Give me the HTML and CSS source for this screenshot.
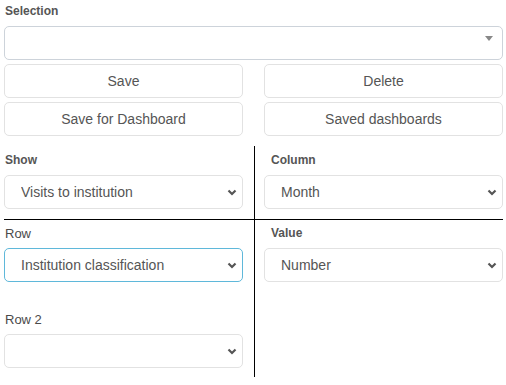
FILE: index.html
```html
<!DOCTYPE html>
<html lang="en">
<head>
    <meta charset="UTF-8">
    <meta name="viewport" content="width=device-width, initial-scale=1.0">
    <title>Pivot settings</title>
    <link rel="stylesheet" href="styles.css">
</head>
<body>
    <div class="page">
        <!-- saved selection -->
        <label class="field-label">Selection</label>
        <div class="combo">
            <span class="combo-arrow"></span>
        </div>

        <div class="button-grid">
            <button class="btn">Save</button>
            <button class="btn">Delete</button>
            <button class="btn">Save for Dashboard</button>
            <button class="btn">Saved dashboards</button>
        </div>

        <!-- pivot fields -->
        <div class="pivot">
            <div class="cell cell-top">
                <label class="field-label">Show</label>
                <div class="select-wrap">
                    <select class="form-select">
                        <option>Visits to institution</option>
                    </select>
                    <svg class="chevron" width="10" height="7" viewBox="0 0 10 7"><path d="M1.5 1.5 L5 5 L8.5 1.5" fill="none" stroke="#555" stroke-width="2.2"/></svg>
                </div>
            </div>
            <div class="divider"></div>
            <div class="cell cell-top cell-right">
                <label class="field-label">Column</label>
                <div class="select-wrap">
                    <select class="form-select">
                        <option>Month</option>
                    </select>
                    <svg class="chevron" width="10" height="7" viewBox="0 0 10 7"><path d="M1.5 1.5 L5 5 L8.5 1.5" fill="none" stroke="#555" stroke-width="2.2"/></svg>
                </div>
            </div>

            <div class="hline"></div>

            <div class="cell cell-mid">
                <label class="field-label light">Row</label>
                <div class="select-wrap">
                    <select class="form-select focused">
                        <option>Institution classification</option>
                    </select>
                    <svg class="chevron" width="10" height="7" viewBox="0 0 10 7"><path d="M1.5 1.5 L5 5 L8.5 1.5" fill="none" stroke="#555" stroke-width="2.2"/></svg>
                </div>
            </div>
            <div class="cell cell-mid cell-right">
                <label class="field-label">Value</label>
                <div class="select-wrap">
                    <select class="form-select">
                        <option>Number</option>
                    </select>
                    <svg class="chevron" width="10" height="7" viewBox="0 0 10 7"><path d="M1.5 1.5 L5 5 L8.5 1.5" fill="none" stroke="#555" stroke-width="2.2"/></svg>
                </div>
            </div>

            <div class="cell cell-bottom">
                <label class="field-label light">Row 2</label>
                <div class="select-wrap">
                    <select class="form-select">
                        <option></option>
                    </select>
                    <svg class="chevron" width="10" height="7" viewBox="0 0 10 7"><path d="M1.5 1.5 L5 5 L8.5 1.5" fill="none" stroke="#555" stroke-width="2.2"/></svg>
                </div>
            </div>
        </div>
    </div>
</body>
</html>
```

FILE: styles.css
```css
body {
    margin: 0;
    background: #fff;
    font-family: "Liberation Sans", Arial, sans-serif;
    color: #555;
}

.page {
    padding: 3px 3px 0 4px;
}

.field-label {
    display: block;
    font-size: 12px;
    font-weight: bold;
    line-height: 17px;
    color: #555;
    padding-left: 1px;
}

.field-label.light {
    font-weight: normal;
    font-size: 13px;
    color: #4a4a4a;
}

.combo {
    position: relative;
    margin-top: 6px;
    height: 34px;
    box-sizing: border-box;
    border: 1px solid #cdd3da;
    border-radius: 5px;
    background: #fff;
}

.combo-arrow {
    position: absolute;
    top: 9px;
    right: 9px;
    width: 0;
    height: 0;
    border-style: solid;
    border-width: 5px 4px 0 4px;
    border-color: #888 transparent transparent transparent;
}

.button-grid {
    display: grid;
    grid-template-columns: 1fr 1fr;
    column-gap: 21px;
    row-gap: 4px;
    margin-top: 4px;
}

.btn {
    height: 34px;
    background: #fff;
    border: 1px solid #e2e2e2;
    border-radius: 5px;
    font-family: inherit;
    font-size: 14px;
    color: #555;
    padding: 0;
}

.pivot {
    display: grid;
    grid-template-columns: 1fr 21px 1fr;
    margin-top: 10px;
}

.divider {
    grid-column: 2;
    grid-row: 1 / 5;
    width: 1px;
    margin-left: 11px;
    background: #000;
}

.hline {
    grid-column: 1 / -1;
    grid-row: 2;
    height: 1px;
    background: #000;
}

.cell {
    grid-row: 1;
    grid-column: 1;
}

.cell-top {
    padding: 6px 0 10px;
}

.cell-mid {
    grid-row: 3;
    padding: 5px 0 0;
}

.cell-right {
    grid-column: 3;
}

.cell-right .field-label {
    padding-left: 7px;
}

.cell-bottom {
    grid-row: 4;
    padding: 29px 0 9px;
}

.cell .field-label {
    margin-bottom: 6px;
}

.select-wrap {
    position: relative;
}

.form-select {
    display: block;
    width: 100%;
    height: 34px;
    box-sizing: border-box;
    appearance: none;
    -webkit-appearance: none;
    background: #fff;
    border: 1px solid #e2e2e2;
    border-radius: 5px;
    padding: 0 30px 0 16px;
    font-family: inherit;
    font-size: 14px;
    color: #555;
    outline: none;
}

.form-select.focused {
    border-color: #5fb8da;
}

.chevron {
    position: absolute;
    right: 6px;
    top: 14px;
    pointer-events: none;
}
```
